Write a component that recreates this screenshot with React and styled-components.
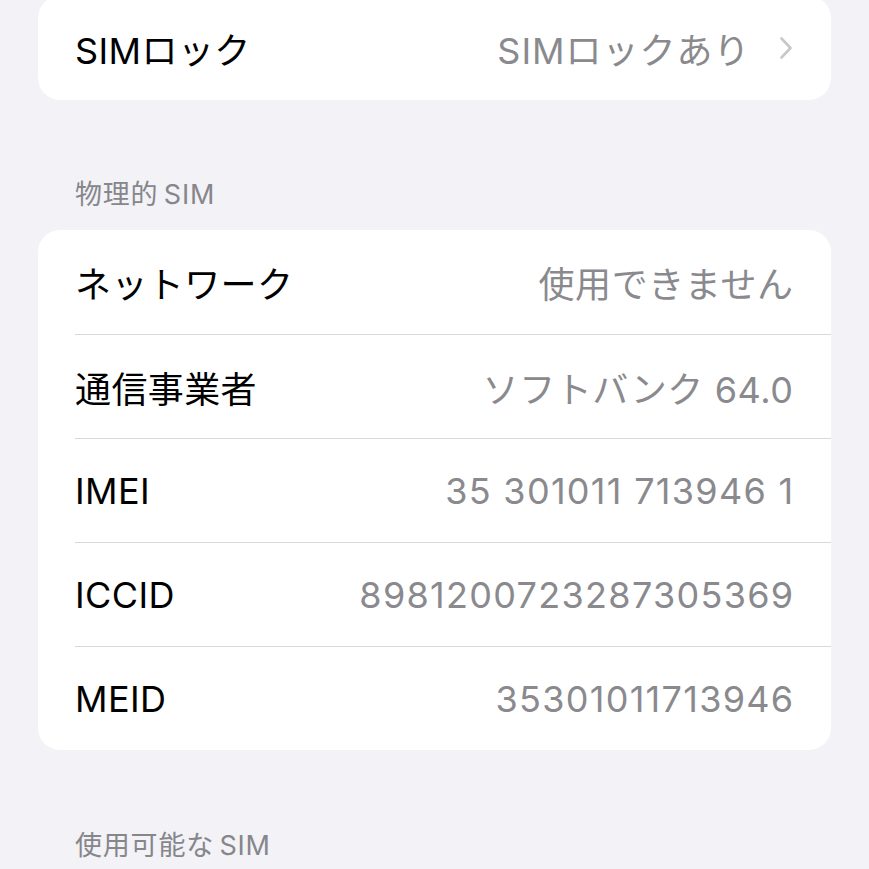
import styled, { createGlobalStyle } from "styled-components";

const GlobalStyle = createGlobalStyle`
  body {
    margin: 0;
    background: #f2f2f7;
    font-family: "Inter", "Noto Sans CJK JP", sans-serif;
    -webkit-font-smoothing: antialiased;
  }
`;

const physicalSim = [
  { label: "ネットワーク", value: "使用できません" },
  { label: "通信事業者", value: "ソフトバンク 64.0" },
  { label: "IMEI", value: "35 301011 713946 1", numeric: true },
  { label: "ICCID", value: "89812007232873053 69".replace(" ", ""), numeric: true },
  { label: "MEID", value: "35301011713946", numeric: true },
];

const Chevron = () => (
  <svg width="14" height="24" viewBox="0 0 14 24">
    <path
      d="M2.5 2.5 L11.5 12 L2.5 21.5"
      fill="none"
      stroke="#c7c7cc"
      strokeWidth="2.6"
      strokeLinecap="round"
      strokeLinejoin="round"
    />
  </svg>
);

const App = () => {
  return (
    <Page>
      <GlobalStyle />
      <Card $top>
        <Row>
          <Label>SIMロック</Label>
          <Value $wide>SIMロックあり</Value>
          <ChevronWrap>
            <Chevron />
          </ChevronWrap>
        </Row>
      </Card>

      <SectionHeader>物理的 SIM</SectionHeader>
      <Card>
        {physicalSim.map((item) => (
          <Row key={item.label}>
            <Label>{item.label}</Label>
            <Value $numeric={item.numeric}>{item.value}</Value>
          </Row>
        ))}
      </Card>

      <SectionHeader $gap={80}>使用可能な SIM</SectionHeader>
    </Page>
  );
};

const Page = styled.div`
  padding: 0 38px;
  overflow: hidden;
  height: 869px;
`;

const Card = styled.div`
  background: #ffffff;
  border-radius: 22px;
  overflow: hidden;
  margin-top: ${(p) => (p.$top ? "-4px" : "0")};
`;

const Row = styled.div`
  display: flex;
  align-items: center;
  height: 104px;
  margin-left: 37px;
  padding-right: 38px;
  box-sizing: border-box;

  & + & {
    border-top: 1.5px solid #d9d9dd;
  }
`;

const Label = styled.span`
  flex: 1;
  font-size: 36px;
  color: #000000;
  letter-spacing: 0.4px;
  white-space: nowrap;
`;

const Value = styled.span`
  font-size: 36px;
  color: #8a8a8e;
  letter-spacing: ${(p) => (p.$numeric ? "1.3px" : p.$wide ? "1px" : "0.6px")};
  margin-right: ${(p) => (p.$numeric ? "-1.5px" : "-0.6px")};
  white-space: nowrap;
`;

const ChevronWrap = styled.span`
  display: flex;
  margin-left: 29px;
`;

const SectionHeader = styled.div`
  margin: ${(p) => p.$gap || 79}px 0 19px 37px;
  font-size: 27px;
  line-height: 32px;
  color: #86868b;
  letter-spacing: 0.8px;
  word-spacing: -3px;
`;

export default App;
